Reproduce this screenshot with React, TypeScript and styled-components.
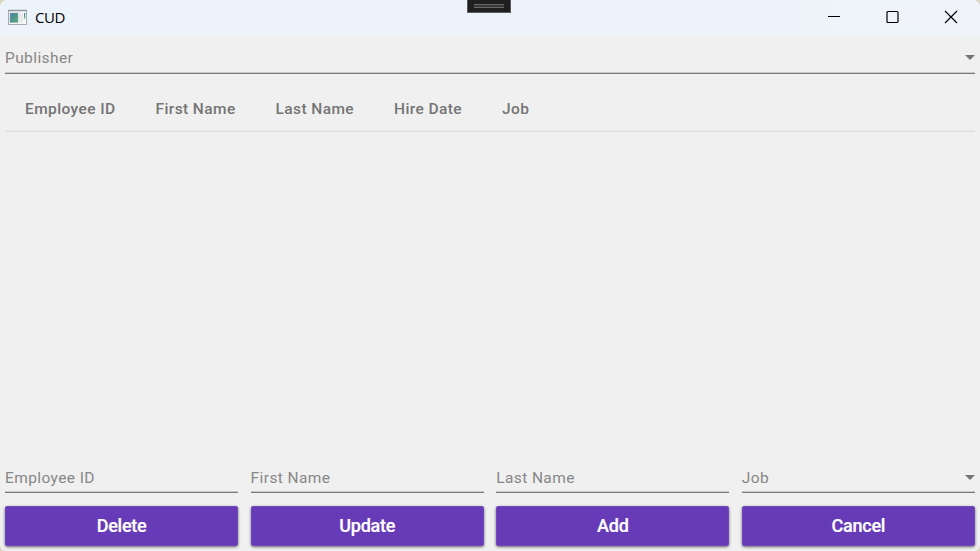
import React from "react";
import styled, { createGlobalStyle } from "styled-components";

const GlobalStyle = createGlobalStyle`
  * { box-sizing: border-box; }
  html, body { margin: 0; background: #d9d8bd; }
`;

const Window = styled.div`
  position: relative;
  display: flex;
  flex-direction: column;
  width: 980px;
  height: 551px;
  overflow: hidden;
  background: #f0f0f0;
  border-radius: 7px 7px 6px 6px;
  font-family: Roboto, sans-serif;
`;

const TitleBar = styled.header`
  display: flex;
  align-items: center;
  flex: 0 0 36px;
  padding: 0 22px 2px 8px;
  background: linear-gradient(90deg, #edf3fb 0%, #edf3fa 78%, #eff3fa 87%, #f0f3fa 100%);
`;

const Title = styled.h1`
  flex: 1;
  margin: 0 0 1px 7px;
  font: 400 15px/20px "Open Sans", sans-serif;
  letter-spacing: -0.5px;
  color: #000;
`;

const Controls = styled.div`
  display: flex;
  gap: 44.5px;
  svg { display: block; width: 14px; height: 14px; }
`;

const DebugHandle = styled.div`
  position: absolute;
  top: 0;
  left: 467px;
  width: 44px;
  height: 13px;
  padding: 4px 6px 0;
  background: #1f1f1f;
  border: 1px solid #5b5b5b;
  border-top: 0;
`;

const Grip = styled.div`
  height: 4px;
  border-top: 1px solid #686868;
  border-bottom: 1px solid #686868;
  background: #383838;
`;

const Content = styled.main`
  display: flex;
  flex-direction: column;
  flex: 1;
  padding: 0 5px 5px;
`;

const Field = styled.div<{ $height: number; $gap: number }>`
  display: flex;
  align-items: flex-end;
  justify-content: space-between;
  height: ${(p) => p.$height}px;
  padding-bottom: ${(p) => p.$gap}px;
  border-bottom: 1px solid #7a7a7a;
  box-shadow: inset 0 -1px #c9c9c9;
  font-size: 15.5px;
  line-height: 22px;
  letter-spacing: 0.4px;
  color: #878787;
`;

const Arrow = styled.svg`
  display: block;
  width: 10px;
  height: 5px;
  margin-bottom: 9px;
  fill: #757575;
`;

const TableHead = styled.div`
  display: flex;
  height: 58px;
  padding: 25px 20px 0;
  gap: 40px;
  border-bottom: 1px solid #dedede;
  box-shadow: inset 0 -1px #e8e8e8;
  font-size: 15.5px;
  font-weight: 500;
  line-height: 20px;
  letter-spacing: 0.4px;
  color: #757575;
`;

const TableBody = styled.div`
  flex: 1;
`;

const Form = styled.div`
  display: grid;
  grid-template-columns: repeat(4, 1fr);
  column-gap: 12.4px;
  row-gap: 13px;
`;

const Button = styled.button`
  height: 40px;
  padding: 0;
  border: 0;
  border-radius: 3px;
  background: #673ab7;
  box-shadow: inset 0 0 0 1px #7148bb, 0 1px 3px rgba(0, 0, 0, 0.6);
  font: 500 18px/40px Roboto, sans-serif;
  letter-spacing: -0.25px;
  -webkit-text-stroke: 0.2px #fff;
  color: #fff;
`;

const DropArrow = () => (
  <Arrow viewBox="0 0 10 5">
    <path d="M0 0H10L5 5Z" />
  </Arrow>
);

const AppIcon = () => (
  <svg width="20" height="17" viewBox="0 0 20 17">
    <defs>
      <linearGradient id="screen" x1="0" y1="0" x2="1" y2="1">
        <stop offset="0" stopColor="#4a7fa3" />
        <stop offset="1" stopColor="#57ad78" />
      </linearGradient>
      <linearGradient id="bar" x1="0" y1="0" x2="0" y2="1">
        <stop offset="0" stopColor="#4a7fb8" />
        <stop offset="1" stopColor="#69b96f" />
      </linearGradient>
    </defs>
    <rect x="0.5" y="1.5" width="18" height="14" fill="#f5f6f7" stroke="#a9adb3" />
    <path d="M0 1.5H19" stroke="#91979f" strokeWidth="1.4" />
    <rect x="2" y="4" width="8" height="9.5" fill="url(#screen)" stroke="#8aa9b0" strokeWidth="0.5" />
    <rect x="11" y="4" width="4" height="9.5" fill="#e9ebeb" />
    <rect x="16" y="4" width="1.3" height="5.5" fill="url(#bar)" />
  </svg>
);

const headings = ["Employee ID", "First Name", "Last Name", "Hire Date", "Job"];
const fields = [
  { label: "Employee ID" },
  { label: "First Name" },
  { label: "Last Name" },
  { label: "Job", select: true },
];
const actions = ["Delete", "Update", "Add", "Cancel"];

export default function App() {
  return (
    <>
      <GlobalStyle />
      <Window>
        <TitleBar>
          <AppIcon />
          <Title>CUD</Title>
          <Controls>
            <svg viewBox="0 0 14 14" stroke="#000"><path d="M1 6.5H13" /></svg>
            <svg viewBox="0 0 14 14" stroke="#000" fill="none" strokeWidth="1.2"><rect x="1" y="1.5" width="11" height="11" rx="1" /></svg>
            <svg viewBox="0 0 14 14" stroke="#000" strokeWidth="1.2"><path d="M1 1L13 13M13 1L1 13" /></svg>
          </Controls>
        </TitleBar>
        <DebugHandle><Grip /></DebugHandle>
        <Content>
          <Field $height={38} $gap={4}>Publisher<DropArrow /></Field>
          <TableHead>
            {headings.map((h) => <span key={h}>{h}</span>)}
          </TableHead>
          <TableBody />
          <Form>
            {fields.map((f) => (
              <Field key={f.label} $height={30} $gap={3}>{f.label}{f.select && <DropArrow />}</Field>
            ))}
            {actions.map((a) => <Button key={a}>{a}</Button>)}
          </Form>
        </Content>
      </Window>
    </>
  );
}
